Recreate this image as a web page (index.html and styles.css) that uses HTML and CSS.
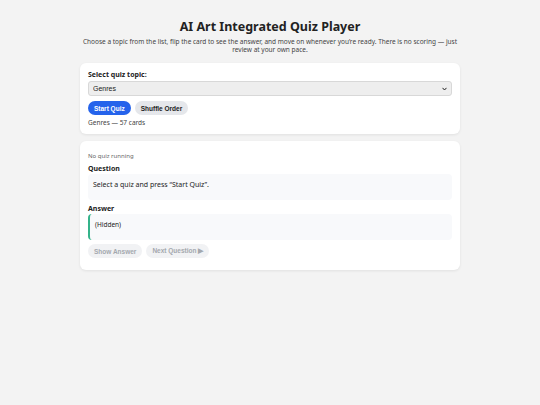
FILE: index.html
```html
<!DOCTYPE html>
<html lang="en">
<head>
<meta charset="utf-8">
<title>AI Art Integrated Quiz Player</title>
<link rel="stylesheet" href="styles.css">
</head>
<body>
<main class="wrap">
  <header class="head">
    <h1 class="title">AI Art Integrated Quiz Player</h1>
    <p class="lead">Choose a topic from the list, flip the card to see the answer, and move on whenever you’re ready. There is no scoring — just review at your own pace.</p>
  </header>

  <section class="card card-top">
    <label class="label" for="topic">Select quiz topic:</label>
    <select class="select" id="topic">
      <option>Genres</option>
    </select>
    <div class="btns">
      <button class="btn btn-primary">Start Quiz</button>
      <button class="btn btn-secondary">Shuffle Order</button>
    </div>
    <p class="meta">Genres — 57 cards</p>
  </section>

  <section class="card card-quiz">
    <p class="status">No quiz running</p>
    <h2 class="sub">Question</h2>
    <div class="box">Select a quiz and press “Start Quiz”.</div>
    <h2 class="sub">Answer</h2>
    <div class="box box-answer">(Hidden)</div>
    <div class="btns btns-quiz">
      <button class="btn btn-disabled" disabled>Show Answer</button>
      <button class="btn btn-disabled" disabled>Next Question ▶</button>
    </div>
  </section>
</main>
</body>
</html>
```

FILE: styles.css
```css
* { box-sizing: border-box; }
html, body { margin: 0; padding: 0; }
body {
  background: #f3f3f3;
  font-family: "Noto Sans", "DejaVu Sans", sans-serif;
  color: #222;
  font-size: 7px;
}
.wrap {
  width: 380px;
  margin: 0 auto;
  padding-top: 18px;
}
.head { text-align: center; margin-bottom: 9px; }
.title {
  margin: 0 0 3px;
  font-size: 12.5px;
  font-weight: 700;
  color: #222;
  line-height: 17px;
}
.lead {
  margin: 0;
  font-size: 6.5px;
  line-height: 8px;
  color: #444;
}
.card {
  background: #fff;
  border-radius: 6px;
  box-shadow: 0 1px 3px rgba(0,0,0,0.08);
  padding: 7px 8px 7px;
  margin-bottom: 7px;
}
.card-quiz { padding-bottom: 12px; }
.label {
  display: block;
  font-weight: 700;
  font-size: 7px;
  line-height: 9px;
  margin-bottom: 2px;
}
.select {
  display: block;
  width: 100%;
  height: 15px;
  font-family: "Liberation Sans", Arial, sans-serif;
  font-size: 7px;
  padding: 0 4px;
  border: 1px solid #d8d8d8;
  border-radius: 3px;
  background-color: #eeeeee;
  background-image: url("data:image/svg+xml,%3Csvg xmlns='http://www.w3.org/2000/svg' width='6' height='4' viewBox='0 0 6 4'%3E%3Cpath d='M0.6 0.6 L3 3.2 L5.4 0.6' fill='none' stroke='%23222' stroke-width='1.2'/%3E%3C/svg%3E");
  background-repeat: no-repeat;
  background-position: right 4px center;
  background-size: 5px 4px;
  -webkit-appearance: none;
  appearance: none;
  color: #222;
}
.btns { display: flex; gap: 4px; margin-top: 5px; }
.btns-quiz { margin-top: 4px; }
.btn {
  font-family: "Liberation Sans", Arial, sans-serif;
  font-weight: 700;
  font-size: 6.5px;
  height: 14px;
  padding: 0 6px;
  border: 0;
  border-radius: 8px;
}
.btn-primary { background: #2563eb; color: #fff; }
.btn-secondary { background: #e5e7eb; color: #222; }
.btn-disabled { background: #f1f2f4; color: #a4a8ae; }
.meta {
  margin: 4px 0 0;
  font-size: 6.5px;
  line-height: 8px;
  color: #444;
}
.status {
  margin: 4px 0 4px;
  font-size: 6px;
  line-height: 8px;
  color: #666;
}
.sub {
  margin: 0 0 1px;
  font-size: 7px;
  line-height: 9px;
  font-weight: 700;
}
.box {
  background: #f8f9fb;
  border-radius: 4px;
  padding: 6px 5px;
  height: 26px;
  font-size: 7px;
  line-height: 9px;
  margin-bottom: 4px;
}
.box-answer {
  border-left: 2px solid #34b38a;
  font-size: 6.5px;
  margin-bottom: 0;
}
```
